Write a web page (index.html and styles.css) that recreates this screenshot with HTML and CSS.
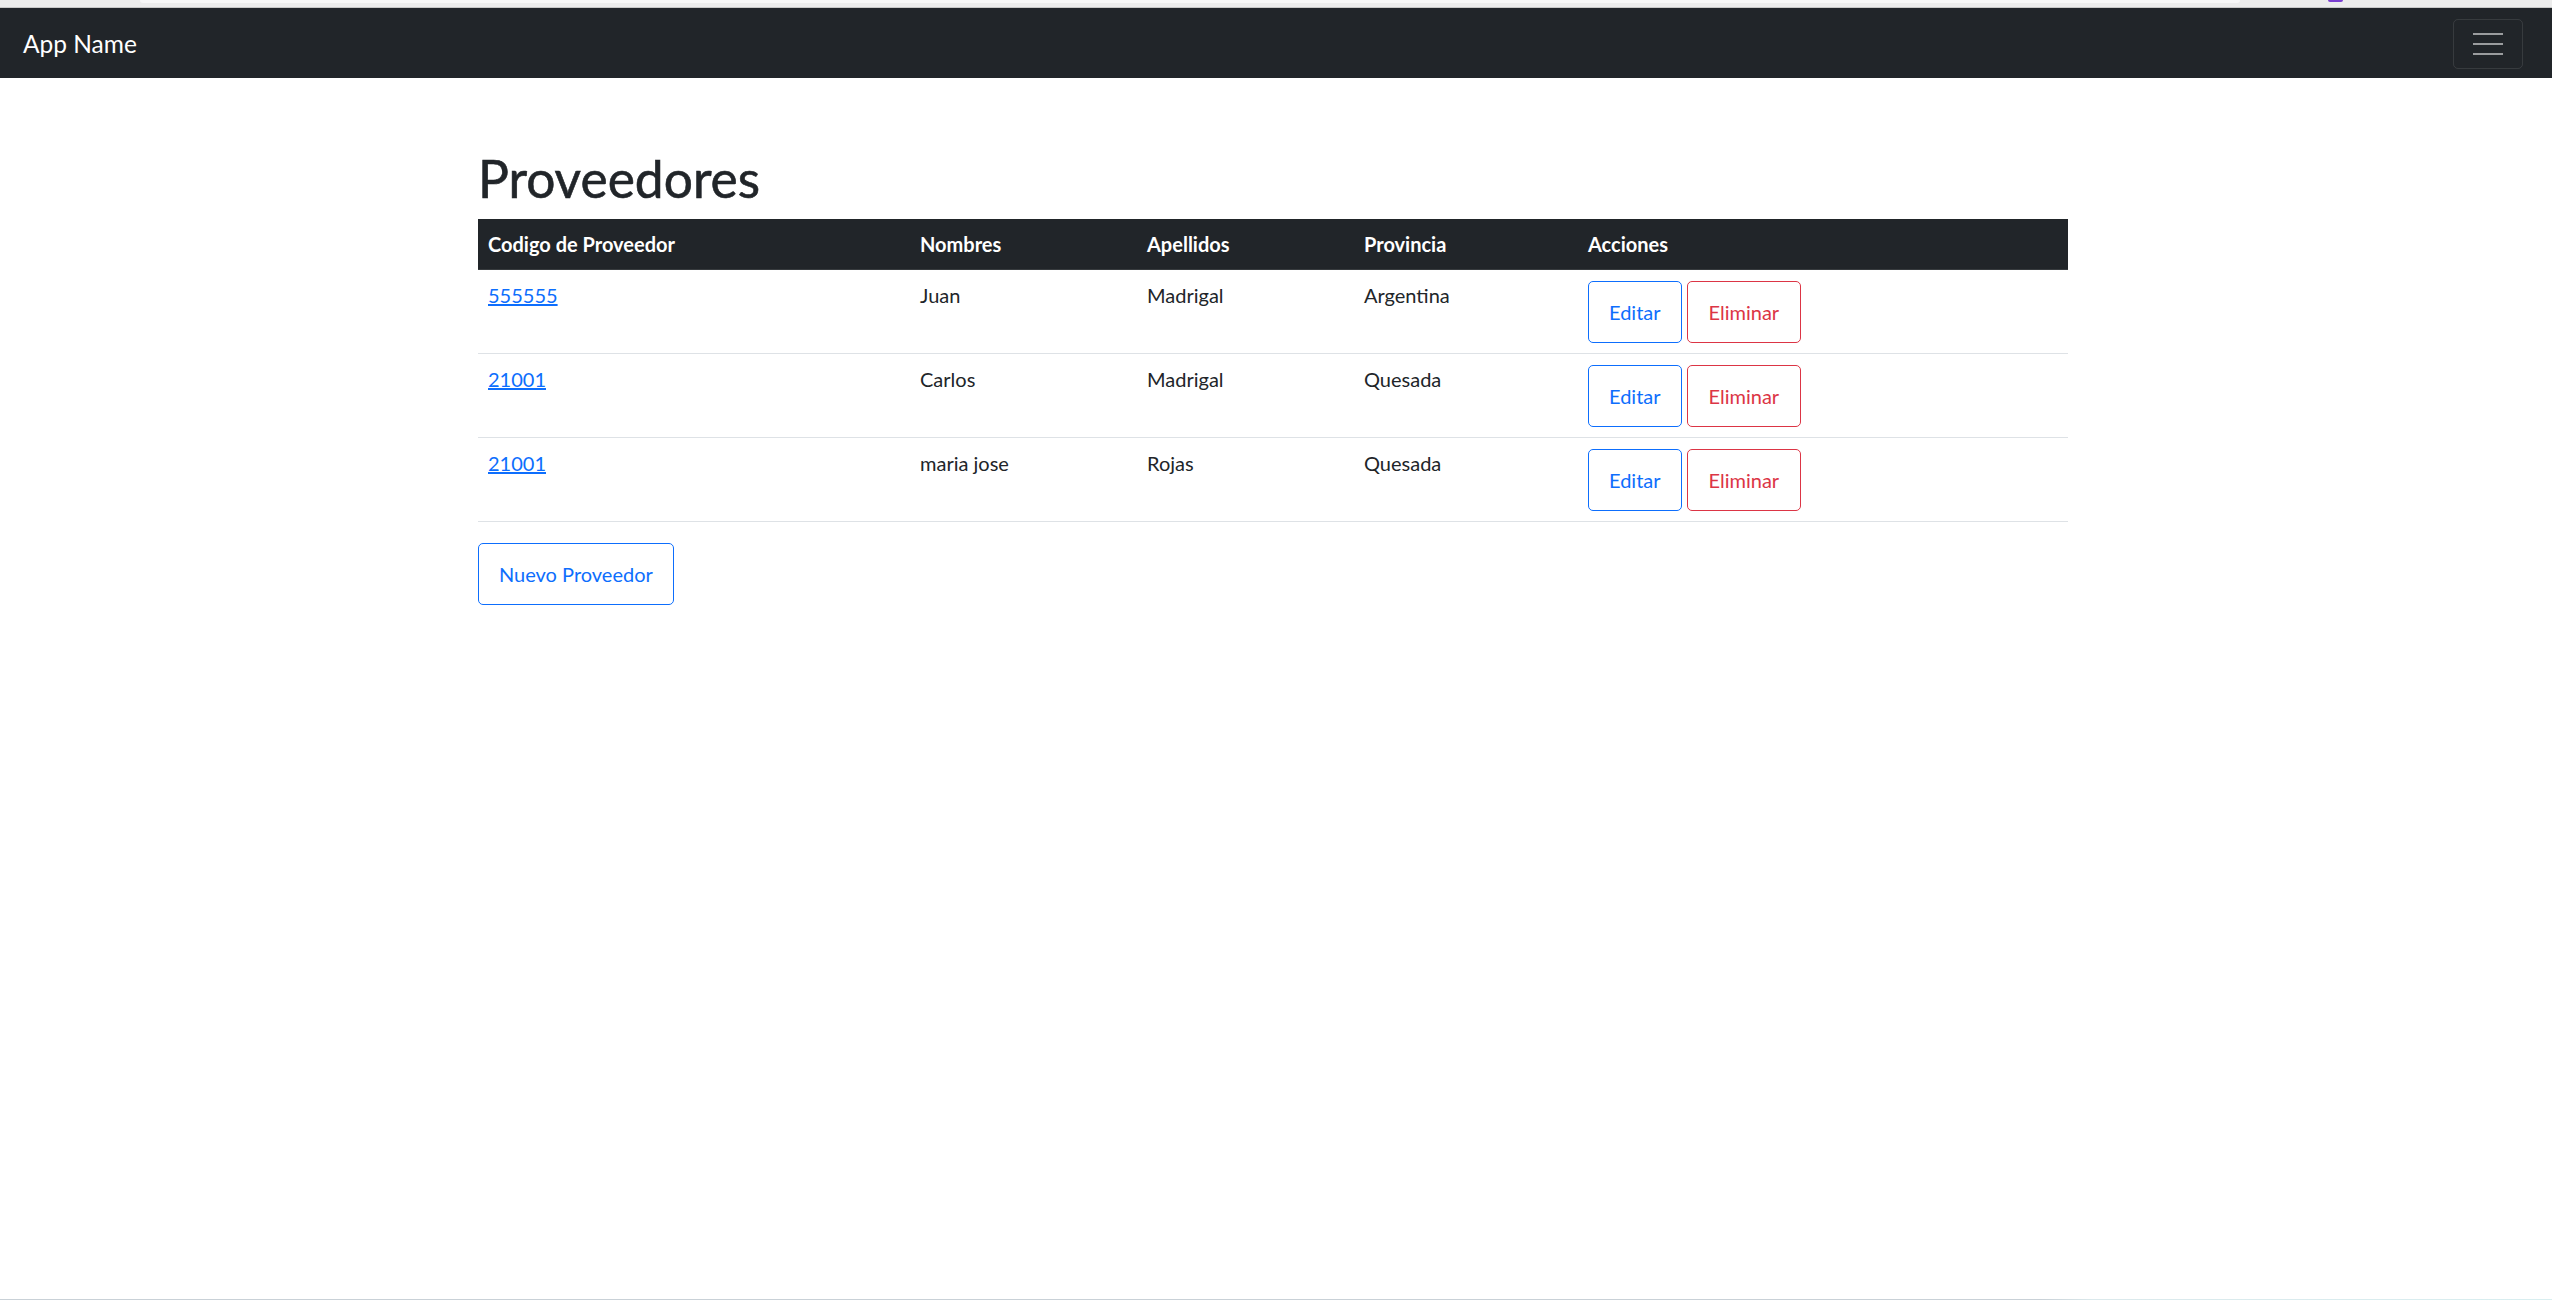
FILE: index.html
```html
<!DOCTYPE html>
<html lang="es">
<head>
<meta charset="utf-8">
<title>Proveedores</title>
<link rel="stylesheet" href="styles.css">
</head>
<body>
<div class="chrome-top"><span class="chrome-tab"></span><span class="chrome-mark"></span></div>
<nav class="navbar">
  <a class="brand" href="#">App Name</a>
  <button class="toggler" type="button" aria-label="Toggle navigation">
    <span class="bar"></span><span class="bar"></span><span class="bar"></span>
  </button>
</nav>
<main class="container">
  <h1 class="title">Proveedores</h1>
  <table class="table">
    <thead>
      <tr>
        <th class="col-code">Codigo de Proveedor</th>
        <th class="col-name">Nombres</th>
        <th class="col-last">Apellidos</th>
        <th class="col-prov">Provincia</th>
        <th class="col-act">Acciones</th>
      </tr>
    </thead>
    <tbody>
      <tr>
        <td><a href="#" class="link">555555</a></td>
        <td>Juan</td>
        <td>Madrigal</td>
        <td>Argentina</td>
        <td><div class="actions"><a href="#" class="btn btn-blue">Editar</a><a href="#" class="btn btn-red">Eliminar</a></div></td>
      </tr>
      <tr>
        <td><a href="#" class="link">21001</a></td>
        <td>Carlos</td>
        <td>Madrigal</td>
        <td>Quesada</td>
        <td><div class="actions"><a href="#" class="btn btn-blue">Editar</a><a href="#" class="btn btn-red">Eliminar</a></div></td>
      </tr>
      <tr>
        <td><a href="#" class="link">21001</a></td>
        <td>maria jose</td>
        <td>Rojas</td>
        <td>Quesada</td>
        <td><div class="actions"><a href="#" class="btn btn-blue">Editar</a><a href="#" class="btn btn-red">Eliminar</a></div></td>
      </tr>
    </tbody>
  </table>
  <a href="#" class="btn btn-blue">Nuevo Proveedor</a>
</main>
<div class="chrome-bottom"></div>
</body>
</html>
```
FILE: styles.css
```css
* { box-sizing: border-box; }
html, body { margin: 0; padding: 0; height: 100%; }
body {
  font-family: Lato, "Noto Sans", "Liberation Sans", sans-serif;
  font-size: 20px;
  line-height: 30px;
  color: #212529;
  background: #fff;
  display: flex;
  flex-direction: column;
}
.chrome-top {
  height: 8px;
  background: #ececec;
  border-bottom: 1px solid #c8c8c8;
  position: relative;
  flex: none;
}
.chrome-tab {
  position: absolute;
  left: 140px;
  top: 0;
  width: 2100px;
  height: 3px;
  background: #f7f7f7;
  border-radius: 0 0 6px 6px;
}
.chrome-mark {
  position: absolute;
  left: 2328px;
  top: 0;
  width: 15px;
  height: 2px;
  background: #7a3fd0;
  border-radius: 0 0 3px 3px;
}
.navbar {
  flex: none;
  height: 70px;
  background: #212529;
  display: flex;
  align-items: center;
  justify-content: space-between;
  padding: 0 29px 0 23px;
}
.brand {
  color: #fff;
  text-decoration: none;
  font-size: 24.5px;
  line-height: 30px;
  margin-top: 2px;
}
.toggler {
  width: 70px;
  height: 50px;
  background: transparent;
  border: 1px solid rgba(255,255,255,0.1);
  border-radius: 5px;
  display: flex;
  flex-direction: column;
  align-items: center;
  justify-content: center;
  gap: 8px;
  padding: 0;
  margin-top: 2px;
}
.toggler .bar {
  display: block;
  width: 30px;
  height: 2px;
  background: rgba(255,255,255,0.55);
}
.container {
  flex: 1;
  width: 1590px;
  margin-left: calc(50% - 798px);
  padding-top: 70px;
}
.title {
  margin: 0 0 11px;
  font-size: 51.5px;
  line-height: 60px;
  font-weight: 400;
  -webkit-text-stroke: 0.6px #212529;
}
.table {
  width: 100%;
  border-collapse: collapse;
  table-layout: fixed;
  margin-bottom: 21px;
}
.table th {
  background: #212529;
  color: #fff;
  font-weight: 700;
  text-align: left;
  padding: 10px;
  border-bottom: 1px solid #373b3e;
}
.table td {
  padding: 10px;
  vertical-align: top;
  border-bottom: 1px solid #dee2e6;
}
.col-code { width: 432px; }
.col-name { width: 227px; }
.col-last { width: 217px; }
.col-prov { width: 224px; }
.col-act { width: 490px; }
.link {
  color: #0d6efd;
  text-decoration: underline;
}
.actions {
  display: flex;
  gap: 5px;
  padding-top: 1px;
}
.btn {
  display: inline-block;
  font-size: 20px;
  line-height: 30px;
  padding: 15px 20px;
  border: 1px solid;
  border-radius: 5px;
  text-decoration: none;
  background: #fff;
}
.btn-blue { color: #0d6efd; border-color: #0d6efd; }
.btn-red { color: #dc3545; border-color: #dc3545; padding: 15px 21px; }
.chrome-bottom {
  flex: none;
  height: 1px;
  background: linear-gradient(90deg, #c9d1d7 0%, #c9d1d7 80%, #dbe9ec 82%, #d8eef0 100%);
}
```
